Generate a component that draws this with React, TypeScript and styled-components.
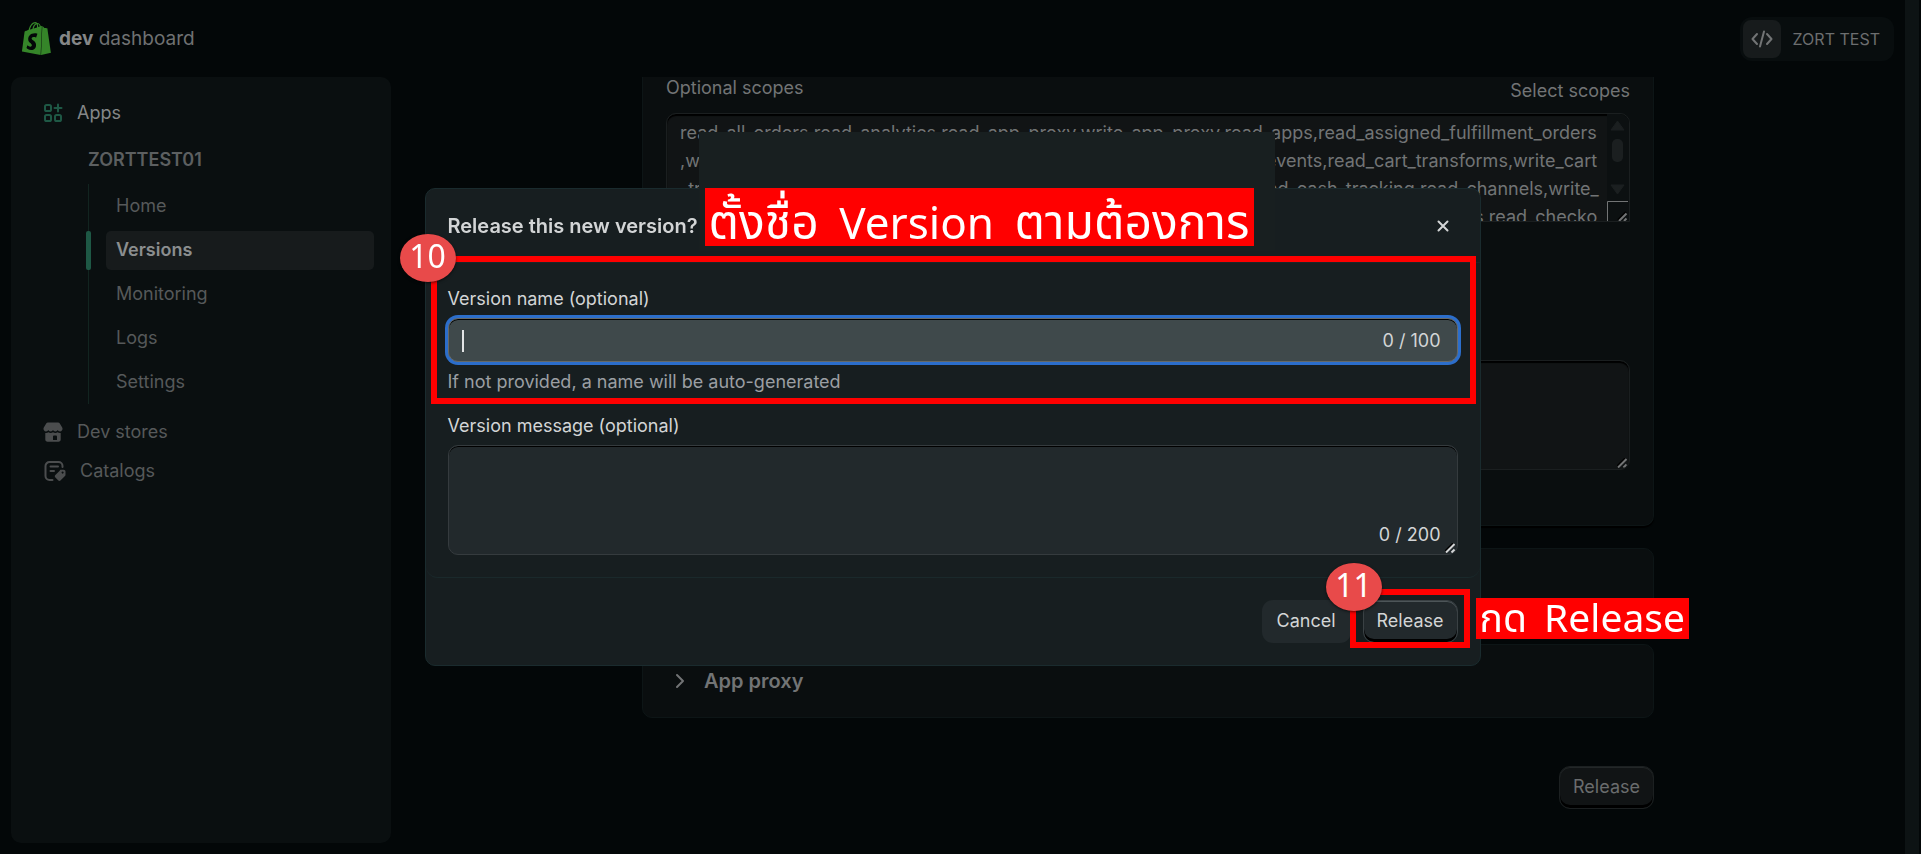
import React from "react";
import styled, { createGlobalStyle, css } from "styled-components";
import { SiShopify } from "react-icons/si";

const GlobalStyle = createGlobalStyle`
  *, *::before, *::after { box-sizing: border-box; }
  body {
    margin: 0;
    background: #030708;
    color: #727475;
    font-family: Inter, "Liberation Sans", sans-serif;
    font-size: 18px;
    line-height: 24px;
  }
  button, input, textarea { font: inherit; color: inherit; margin: 0; }
  svg { display: block; flex: none; }
`;

/* ---------- Page frame ---------- */

const Page = styled.div`
  display: grid;
  grid-template-columns: minmax(0, 1fr) 16px;
  height: 100vh;
  overflow: hidden;
`;

const ScrollTrack = styled.div`
  background: #0d1314;
  border-right: 2px solid #030708;
`;

const Shell = styled.div`
  display: flex;
  flex-direction: column;
  min-height: 0;
`;

const TopBar = styled.header`
  display: flex;
  align-items: center;
  justify-content: space-between;
  height: 77px;
  flex: none;
  padding: 0 11px 0 20px;
`;

const Brand = styled.a`
  display: flex;
  align-items: center;
  gap: 6px;
  color: #6f7172;
  font-size: 19px;
  text-decoration: none;

  svg { color: #358529; }
  b { font-weight: 700; color: #858788; }
`;

const Account = styled.button`
  display: flex;
  align-items: center;
  gap: 12px;
  height: 44px;
  padding: 0 14px 0 3px;
  border: 0;
  border-radius: 12px;
  background: #080d0e;
  color: #6c6e6f;
  font-size: 16px;
`;

const AccountIcon = styled.span`
  display: grid;
  place-items: center;
  width: 38px;
  height: 38px;
  border-radius: 8px;
  background: #171b1c;
  color: #727475;
`;

const Columns = styled.div`
  display: flex;
  flex: 1;
  min-height: 0;
`;

/* ---------- Sidebar ---------- */

const Sidebar = styled.nav`
  width: 380px;
  flex: none;
  margin: 0 0 11px 11px;
  padding: 16px;
  border-radius: 10px;
  background: #0a0f10;
`;

const NavLink = styled.a<{ $active?: boolean }>`
  display: flex;
  align-items: center;
  gap: 14px;
  height: 39px;
  padding-left: 16px;
  color: ${(p) => (p.$active ? "#858788" : "#56595a")};
  text-decoration: none;

  svg { color: ${(p) => (p.$active ? "#1e5845" : "#4b4d4e")}; }
`;

const AppName = styled.div`
  display: flex;
  align-items: center;
  height: 44px;
  margin: 6px 0 2px;
  padding-left: 61px;
  color: #5c5f60;
  font-weight: 600;
`;

const SubList = styled.ul`
  list-style: none;
  margin: 0 1px 8px 61px;
  padding: 0;
  border-left: 1px solid #122420;
`;

const SubItem = styled.li`
  display: flex;
  align-items: center;
  height: 44px;
`;

const SubLink = styled.a<{ $current?: boolean }>`
  position: relative;
  display: flex;
  align-items: center;
  flex: 1;
  height: 39px;
  margin-left: 17px;
  padding-left: 10px;
  border-radius: 5px;
  color: #56595a;
  text-decoration: none;

  ${(p) =>
    p.$current &&
    css`
      background: #171b1c;
      color: #8b8e8f;
      font-weight: 600;

      &::before {
        content: "";
        position: absolute;
        left: -20px;
        width: 5px;
        height: 39px;
        border-radius: 2px;
        background: #1e5845;
      }
    `}
`;

/* ---------- Main content ---------- */

const Main = styled.main`
  flex: 1;
  min-width: 0;
  overflow: hidden;
`;

const Content = styled.div`
  display: flex;
  flex-direction: column;
  gap: 22px;
  max-width: 1012px;
  margin: 0 auto;
`;

const Card = styled.section<{ $cut?: boolean }>`
  min-height: 74px;
  padding: 0 23px;
  border: 1px solid #0d1516;
  border-radius: 10px;
  background: #0a0e0f;

  ${(p) =>
    p.$cut &&
    css`
      padding-bottom: 55px;
      border-top: 0;
      border-radius: 0 0 10px 10px;
      box-shadow: 0 2px 1px #000;
    `}
`;

const FieldHead = styled.div`
  display: flex;
  justify-content: space-between;
  align-items: flex-start;
  margin-bottom: 8px;

  label { line-height: 22px; }
  a { line-height: 28px; color: inherit; text-decoration: none; }
`;

const DimBox = styled.div`
  position: relative;
  display: flex;
  border: 1px solid #1b1f20;
  border-radius: 10px;
  background: #111415;
  box-shadow: inset 0 2px 1px #000;
  overflow: hidden;
`;

const ScopeBox = styled(DimBox)`
  height: 109px;
  margin-bottom: 138px;
  border-bottom-left-radius: 0;
  border-bottom-right-radius: 0;
`;

const DimArea = styled.textarea`
  display: block;
  flex: 1;
  min-width: 0;
  height: 108px;
  padding: 5px 0 0 13px;
  border: 0;
  outline: 0;
  background: transparent;
  color: #727475;
  line-height: 28px;
  white-space: pre;
  resize: none;
  overflow: hidden;
`;

const Grip = styled.svg`
  position: absolute;
  right: 2px;
  bottom: 1px;
`;

const Disclosure = styled.button`
  display: flex;
  align-items: center;
  gap: 18px;
  height: 72px;
  padding: 0 0 0 8px;
  border: 0;
  background: none;
  font-size: 20px;
  font-weight: 600;
`;

const PageActions = styled.div`
  display: flex;
  justify-content: flex-end;
  margin-top: 26px;
`;

const Button = styled.button<{ $tone: "dim" | "raised" | "flat" }>`
  height: 43px;
  padding: 0 13px 1px;
  border-radius: 11px;
  line-height: 24px;

  ${(p) =>
    p.$tone === "dim" &&
    css`
      border: 1px solid #1c2021;
      background: #111415;
      color: #6a6c6d;
      box-shadow: inset 0 1px #232728, inset 0 -3px #000;
    `}
  ${(p) =>
    p.$tone === "raised" &&
    css`
      border: 1px solid #3a4144;
      background: #22292c;
      box-shadow: inset 0 1px #4d5558, inset 0 -3px #000;
    `}
  ${(p) =>
    p.$tone === "flat" &&
    css`
      padding: 0 15px 1px;
      border: 0;
      background: #22292c;
    `}
`;

/* ---------- Dialog ---------- */

const Overlay = styled.div`
  position: fixed;
  inset: 0 16px 0 0;
  display: flex;
  align-items: center;
  justify-content: center;
`;

const Dialog = styled.div`
  width: 1056px;
  border: 1px solid #1a2b2e;
  border-radius: 10px;
  background: #171e20;
  color: #d3d5d6;
`;

const DialogHead = styled.div`
  position: relative;
  display: flex;
  align-items: center;
  justify-content: space-between;
  height: 74px;
  padding: 0 31px 0 22px;
  border-bottom: 1px solid #1b2628;
`;

const Title = styled.h2`
  margin: 0;
  font-size: 20px;
  font-weight: 600;
`;

const Close = styled.button`
  padding: 0;
  border: 0;
  background: none;
`;

const DialogBody = styled.div`
  padding: 24px 22px 22px;
  border-bottom: 1px solid #1a292b;
  border-radius: 0 0 12px 12px;
`;

const Field = styled.div`
  position: relative;
  display: flex;
  flex-direction: column;

  & + & { margin-top: 20px; }
  label { margin-bottom: 7px; }
`;

const NameBox = styled.div`
  display: flex;
  align-items: center;
  height: 44px;
  padding: 1px 16px 0 13px;
  border: 1px solid #666a69;
  border-radius: 10px;
  background: #3f494b;
  box-shadow: 0 0 0 3px #2c6ecb, inset 0 1px #000;
`;

const NameInput = styled.input`
  flex: 1;
  min-width: 0;
  padding: 0;
  border: 0;
  outline: 0;
  background: transparent;
  caret-color: transparent;
`;

const Caret = styled.span`
  width: 2px;
  height: 22px;
  background: #e3e5e6;
`;

const Help = styled.p`
  margin: 8px 0 0;
  color: #9b9fa3;
`;

const MessageBox = styled.div`
  position: relative;
  display: flex;
  height: 110px;
  border: 1px solid #353b3e;
  border-radius: 10px;
  background: #22292c;
  box-shadow: inset 0 1px #000;
`;

const MessageArea = styled.textarea`
  flex: 1;
  min-width: 0;
  padding: 8px 14px;
  border: 0;
  outline: 0;
  background: transparent;
  resize: none;
`;

const AreaCount = styled.span`
  position: absolute;
  right: 16px;
  bottom: 7px;
`;

const DialogFoot = styled.div`
  display: flex;
  justify-content: flex-end;
  gap: 12px;
  padding: 22px;
`;

/* ---------- Step annotations drawn over the dialog ---------- */

const Highlight = styled.div<{ $inset: string }>`
  position: absolute;
  inset: ${(p) => p.$inset};
  border: 6px solid #ff0000;
  pointer-events: none;
`;

const Badge = styled.span<{ $left: number; $top: number }>`
  position: absolute;
  left: ${(p) => p.$left}px;
  top: ${(p) => p.$top}px;
  display: grid;
  place-items: center;
  width: 56px;
  height: 48px;
  border-radius: 50%;
  background: #e84a4a;
  box-shadow: 0 1px 3px rgba(0, 0, 0, 0.6);
  color: #fff;
  font: 32px "Noto Sans Thai", "Noto Sans", sans-serif;
  line-height: 48px;
`;

const Patch = styled.div`
  position: absolute;
  left: 273px;
  top: -57px;
  width: 576px;
  height: 119px;
  padding: 56px 6px 0;
  background: #181f20;
`;

const Note = styled.div<{ $size: "large" | "small" }>`
  width: max-content;
  background: #ff0000;
  color: #fff;
  font-family: "Noto Sans Thai", "Noto Sans", sans-serif;
  font-weight: 400;
  white-space: nowrap;

  ${(p) =>
    p.$size === "large"
      ? css`
          height: 58px;
          padding: 0 4px;
          font-size: 48px;
          line-height: 74px;
        `
      : css`
          position: absolute;
          left: calc(100% + 18px);
          top: -2px;
          height: 41px;
          padding: 0 4px;
          font-size: 39px;
          line-height: 46px;
        `}
`;

const Latin = styled.span<{ $before: number; $after: number; $size?: number }>`
  margin: 0 ${(p) => p.$after}px 0 ${(p) => p.$before}px;
  ${(p) => p.$size && css`font-size: ${p.$size}px;`}
`;

const Marked = styled.div`
  position: relative;
`;

/* ---------- Icons ---------- */

const AppsIcon = () => (
  <svg width="20" height="20" viewBox="0 0 20 20" fill="none" stroke="currentColor" strokeWidth="2">
    <rect x="2" y="2" width="6" height="6" rx="1.6" />
    <rect x="2" y="12" width="6" height="6" rx="1.6" />
    <rect x="12" y="12" width="6" height="6" rx="1.6" />
    <path d="M15 1.6v7M11.5 5.1h7" strokeLinecap="round" />
  </svg>
);

const StoreIcon = () => (
  <svg width="20" height="20" viewBox="0 0 20 20" fill="currentColor">
    <path d="M5 0.5h10c.8 0 1.400.4 1.800 1l2.400 4c.9 1.700-.1 4-2.200 4-1.100 0-1.900-.6-2.300-1.400-.4.800-1.200 1.400-2.300 1.400s-2-.6-2.400-1.400c-.4.800-1.300 1.400-2.400 1.400S5.700 8.900 5.300 8.100C4.900 8.900 4.100 9.500 3 9.500c-2.100 0-3.100-2.300-2.200-4l2.400-4c.4-.6 1-1 1.800-1z" />
    <path
      fillRule="evenodd"
      d="M2.300 11c1.200.2 2.300-.1 3.100-.7 1.300 1 3.300 1 4.600 0 1.300 1 3.300 1 4.600 0 .8.600 1.900.9 3.100.7v6.500c0 1.300-.9 2.200-2.200 2.200h-11c-1.300 0-2.200-.9-2.200-2.200zM10 18h4v-3.200c0-.7-.5-1.200-1.200-1.200h-1.600c-.7 0-1.200.5-1.200 1.200z"
    />
  </svg>
);

const CatalogIcon = () => (
  <svg width="23" height="22" viewBox="0 0 23 22" fill="none" stroke="currentColor" strokeWidth="2" strokeLinecap="round">
    <path d="M9.500 20H6.500a4 4 0 0 1-4-4V6a4 4 0 0 1 4-4h9a4 4 0 0 1 4 4v1" />
    <path d="M7.500 6.500h7.500M7.500 11h3.500" />
    <path
      d="M17.500 9.700h3.200c1 0 1.800.8 1.800 1.800v3.200c0 .5-.2 1-.5 1.300l-4.300 4.300c-.8.800-1.900.8-2.600 0l-2.700-2.700c-.8-.8-.8-1.900 0-2.600l4.300-4.300c.2-.6.4-1 .8-1zM19.600 11.500a1 1 0 1 0 .01 0z"
      fill="currentColor"
      fillRule="evenodd"
      stroke="none"
    />
  </svg>
);

const CodeIcon = () => (
  <svg width="22" height="18" viewBox="0 0 22 18" fill="none" stroke="currentColor" strokeWidth="2" strokeLinecap="round" strokeLinejoin="round">
    <path d="M6 4 1.500 9 6 14M16 4l4.500 5-4.500 5M13 1.500 9 16.500" />
  </svg>
);

const ChevronIcon = () => (
  <svg width="12" height="16" viewBox="0 0 12 16" fill="none" stroke="currentColor" strokeWidth="2" strokeLinecap="round" strokeLinejoin="round">
    <path d="m3 2 6 6-6 6" />
  </svg>
);

const CloseIcon = () => (
  <svg width="12" height="12" viewBox="0 0 12 12" fill="none" stroke="currentColor" strokeWidth="2" strokeLinecap="round">
    <path d="m1.500 1.500 9 9m0-9-9 9" />
  </svg>
);

const ResizeGrip = ({ color }: { color: string }) => (
  <Grip width="10" height="10" viewBox="0 0 10 10" aria-hidden="true">
    <path d="M0 8.500 8.500 0" stroke="#000" strokeWidth="2" />
    <path d="M1 9.500 9.500 1M6.500 9.500l3-3" stroke={color} strokeWidth="2" />
  </Grip>
);

const ScopeScrollbar = () => (
  <svg width="22" height="108" viewBox="0 0 22 108" aria-hidden="true">
    <path d="M0 0h22v108H0z" fill="#0c1011" />
    <path d="M10.500 7 17 16H4z" fill="#1b1f20" stroke="#1b1f20" strokeLinejoin="round" />
    <rect x="5" y="25" width="11" height="23" rx="5" fill="#1b1f20" />
    <path d="M10.500 80 17 71H4z" fill="#1b1f20" stroke="#1b1f20" strokeLinejoin="round" />
    <path d="M0.500 108V87.500H21" fill="none" stroke="#727475" />
    <path d="M11 106 19 98" stroke="#000" strokeWidth="2" />
    <path d="M12 107 19.500 99.500M17 107l2.500-2.500" stroke="#727475" strokeWidth="2" />
  </svg>
);

/* ---------- Data ---------- */

const scopes = [
  "read_all_orders,read_analytics,read_app_proxy,write_app_proxy,read_apps,read_assigned_fulfillment_orders",
  ",write_assigned_fulfillment_orders,read_audit_events,read_customer_events,read_cart_transforms,write_cart",
  "_transforms,read_all_cart_transforms,read_validations,write_orders,read_cash_tracking,read_channels,write_",
  "channels,read_checkout_branding_settings,write_checkout_branding_settings,write_checkouts,read_checko",
].join("\n");

const appPages = ["Home", "Versions", "Monitoring", "Logs", "Settings"];

export default function App() {
  return (
    <>
      <GlobalStyle />
      <Page>
        <Shell>
          <TopBar>
            <Brand href="#">
              <SiShopify size={33} />
              <span>
                <b>dev</b> dashboard
              </span>
            </Brand>
            <Account type="button">
              <AccountIcon>
                <CodeIcon />
              </AccountIcon>
              ZORT TEST
            </Account>
          </TopBar>
          <Columns>
            <Sidebar>
              <NavLink href="#" $active>
                <AppsIcon />
                Apps
              </NavLink>
              <AppName>ZORTTEST01</AppName>
              <SubList>
                {appPages.map((page) => (
                  <SubItem key={page}>
                    <SubLink href="#" $current={page === "Versions"}>
                      {page}
                    </SubLink>
                  </SubItem>
                ))}
              </SubList>
              <NavLink href="#">
                <StoreIcon />
                Dev stores
              </NavLink>
              <NavLink href="#">
                <CatalogIcon />
                Catalogs
              </NavLink>
            </Sidebar>
            <Main>
              <Content>
                <Card $cut>
                  <FieldHead>
                    <label htmlFor="scopes">Optional scopes</label>
                    <a href="#">Select scopes</a>
                  </FieldHead>
                  <ScopeBox>
                    <DimArea id="scopes" defaultValue={scopes} />
                    <ScopeScrollbar />
                  </ScopeBox>
                  <DimBox>
                    <DimArea aria-label="Redirect URLs" />
                    <ResizeGrip color="#727475" />
                  </DimBox>
                </Card>
                <Card />
                <Card>
                  <Disclosure type="button">
                    <ChevronIcon />
                    App proxy
                  </Disclosure>
                </Card>
                <PageActions>
                  <Button type="button" $tone="dim">
                    Release
                  </Button>
                </PageActions>
              </Content>
            </Main>
          </Columns>
        </Shell>
        <ScrollTrack />
      </Page>

      <Overlay>
        <Dialog role="dialog" aria-labelledby="dialog-title">
          <DialogHead>
            <Title id="dialog-title">Release this new version?</Title>
            <Close type="button" aria-label="Close">
              <CloseIcon />
            </Close>
            <Patch>
              <Note $size="large">
                ตั้งชื่อ <Latin $before={8} $after={8} $size={44}>Version</Latin> ตามต้องการ
              </Note>
            </Patch>
          </DialogHead>
          <DialogBody>
            <Field>
              <label htmlFor="version-name">Version name (optional)</label>
              <NameBox>
                <Caret />
                <NameInput id="version-name" />
                <span>0 / 100</span>
              </NameBox>
              <Help>If not provided, a name will be auto-generated</Help>
              <Highlight $inset="-31px -18px -10px -17px" />
              <Badge $left={-48} $top={-53}>
                10
              </Badge>
            </Field>
            <Field>
              <label htmlFor="version-message">Version message (optional)</label>
              <MessageBox>
                <MessageArea id="version-message" />
                <AreaCount>0 / 200</AreaCount>
                <ResizeGrip color="#d3d5d6" />
              </MessageBox>
            </Field>
          </DialogBody>
          <DialogFoot>
            <Button type="button" $tone="flat">
              Cancel
            </Button>
            <Marked>
              <Button type="button" $tone="raised">
                Release
              </Button>
              <Highlight $inset="-11px -12px -5px -13px" />
              <Badge $left={-37} $top={-37}>
                11
              </Badge>
              <Note $size="small">
                กด <Latin $before={7} $after={0}>Release</Latin>
              </Note>
            </Marked>
          </DialogFoot>
        </Dialog>
      </Overlay>
    </>
  );
}
